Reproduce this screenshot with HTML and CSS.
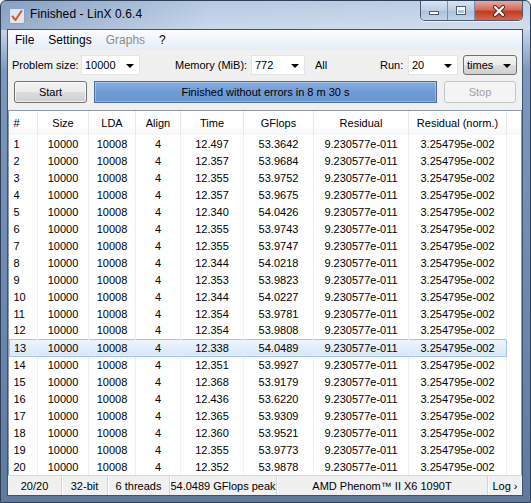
FILE: index.html
```html
<!DOCTYPE html>
<html lang="en">
<head>
  <meta charset="UTF-8" />
  <title>Finished - LinX 0.6.4</title>
  <link rel="stylesheet" href="styles.css">
</head>
<body>

<div class="window">
  <!-- Title bar -->
  <div class="titlebar">
    <svg class="app-icon" width="16" height="16" viewBox="0 0 16 16">
      <rect x="0.5" y="0.5" width="15" height="15" rx="1.5" fill="#dfe7f1" stroke="#8aa4c6"/>
      <path d="M3.5 8.5 L6.5 12 L12.5 3" fill="none" stroke="#d9572b" stroke-width="2" stroke-linecap="round" stroke-linejoin="round"/>
    </svg>
    <span class="title">Finished - LinX 0.6.4</span>
    <div class="caption-btns">
      <div class="cap-btn cap-min"><span class="min-bar"></span></div>
      <div class="cap-btn cap-max"><span class="max-box"></span></div>
      <div class="cap-btn cap-close">
        <svg width="14" height="12" viewBox="0 0 14 12">
          <path d="M3 2 L11 10 M11 2 L3 10" stroke="#4a2a24" stroke-width="4" stroke-linecap="round"/>
          <path d="M3 2 L11 10 M11 2 L3 10" stroke="#ffffff" stroke-width="2.2" stroke-linecap="round"/>
        </svg>
      </div>
    </div>
  </div>

  <div class="client">
    <!-- Menu -->
    <div class="menubar">
      <span class="menu-item">File</span>
      <span class="menu-item">Settings</span>
      <span class="menu-item disabled">Graphs</span>
      <span class="menu-item">?</span>
    </div>

    <!-- Toolbar -->
    <div class="toolbar">
      <div class="tool-row">
        <span class="label label-size">Problem size:</span>
        <div class="combo combo-size">10000<i class="arrow"></i></div>
        <span class="label label-mem">Memory (MiB):</span>
        <div class="combo combo-mem">772<i class="arrow"></i></div>
        <span class="label label-all">All</span>
        <span class="label label-run">Run:</span>
        <div class="combo combo-run">20<i class="arrow"></i></div>
        <div class="combo combo-times">times<i class="arrow"></i></div>
      </div>
      <div class="tool-row">
        <div class="btn btn-start">Start</div>
        <div class="progress">Finished without errors in 8 m 30 s</div>
        <div class="btn btn-stop">Stop</div>
      </div>
    </div>

    <!-- Results list -->
    <div class="list">
      <table class="results">
        <colgroup>
          <col style="width:28px"><col style="width:51px"><col style="width:47px">
          <col style="width:45px"><col style="width:63px"><col style="width:70px">
          <col style="width:95px"><col style="width:98px"><col style="width:15px">
        </colgroup>
        <thead>
          <tr>
            <th class="num">#</th><th>Size</th><th>LDA</th><th>Align</th><th>Time</th>
            <th>GFlops</th><th>Residual</th><th>Residual (norm.)</th><th class="filler"></th>
          </tr>
        </thead>
        <tbody>
          <tr><td class="num">1</td><td>10000</td><td>10008</td><td>4</td><td>12.497</td><td>53.3642</td><td>9.230577e-011</td><td>3.254795e-002</td><td></td></tr>
          <tr><td class="num">2</td><td>10000</td><td>10008</td><td>4</td><td>12.357</td><td>53.9684</td><td>9.230577e-011</td><td>3.254795e-002</td><td></td></tr>
          <tr><td class="num">3</td><td>10000</td><td>10008</td><td>4</td><td>12.355</td><td>53.9752</td><td>9.230577e-011</td><td>3.254795e-002</td><td></td></tr>
          <tr><td class="num">4</td><td>10000</td><td>10008</td><td>4</td><td>12.357</td><td>53.9675</td><td>9.230577e-011</td><td>3.254795e-002</td><td></td></tr>
          <tr><td class="num">5</td><td>10000</td><td>10008</td><td>4</td><td>12.340</td><td>54.0426</td><td>9.230577e-011</td><td>3.254795e-002</td><td></td></tr>
          <tr><td class="num">6</td><td>10000</td><td>10008</td><td>4</td><td>12.355</td><td>53.9743</td><td>9.230577e-011</td><td>3.254795e-002</td><td></td></tr>
          <tr><td class="num">7</td><td>10000</td><td>10008</td><td>4</td><td>12.355</td><td>53.9747</td><td>9.230577e-011</td><td>3.254795e-002</td><td></td></tr>
          <tr><td class="num">8</td><td>10000</td><td>10008</td><td>4</td><td>12.344</td><td>54.0218</td><td>9.230577e-011</td><td>3.254795e-002</td><td></td></tr>
          <tr><td class="num">9</td><td>10000</td><td>10008</td><td>4</td><td>12.353</td><td>53.9823</td><td>9.230577e-011</td><td>3.254795e-002</td><td></td></tr>
          <tr><td class="num">10</td><td>10000</td><td>10008</td><td>4</td><td>12.344</td><td>54.0227</td><td>9.230577e-011</td><td>3.254795e-002</td><td></td></tr>
          <tr><td class="num">11</td><td>10000</td><td>10008</td><td>4</td><td>12.354</td><td>53.9781</td><td>9.230577e-011</td><td>3.254795e-002</td><td></td></tr>
          <tr><td class="num">12</td><td>10000</td><td>10008</td><td>4</td><td>12.354</td><td>53.9808</td><td>9.230577e-011</td><td>3.254795e-002</td><td></td></tr>
          <tr class="selected"><td class="num">13</td><td>10000</td><td>10008</td><td>4</td><td>12.338</td><td>54.0489</td><td>9.230577e-011</td><td>3.254795e-002</td><td></td></tr>
          <tr><td class="num">14</td><td>10000</td><td>10008</td><td>4</td><td>12.351</td><td>53.9927</td><td>9.230577e-011</td><td>3.254795e-002</td><td></td></tr>
          <tr><td class="num">15</td><td>10000</td><td>10008</td><td>4</td><td>12.368</td><td>53.9179</td><td>9.230577e-011</td><td>3.254795e-002</td><td></td></tr>
          <tr><td class="num">16</td><td>10000</td><td>10008</td><td>4</td><td>12.436</td><td>53.6220</td><td>9.230577e-011</td><td>3.254795e-002</td><td></td></tr>
          <tr><td class="num">17</td><td>10000</td><td>10008</td><td>4</td><td>12.365</td><td>53.9309</td><td>9.230577e-011</td><td>3.254795e-002</td><td></td></tr>
          <tr><td class="num">18</td><td>10000</td><td>10008</td><td>4</td><td>12.360</td><td>53.9521</td><td>9.230577e-011</td><td>3.254795e-002</td><td></td></tr>
          <tr><td class="num">19</td><td>10000</td><td>10008</td><td>4</td><td>12.355</td><td>53.9773</td><td>9.230577e-011</td><td>3.254795e-002</td><td></td></tr>
          <tr><td class="num">20</td><td>10000</td><td>10008</td><td>4</td><td>12.352</td><td>53.9878</td><td>9.230577e-011</td><td>3.254795e-002</td><td></td></tr>
        </tbody>
      </table>
    </div>

    <!-- Status bar -->
    <div class="statusbar">
      <span class="st st-count">20/20</span>
      <span class="st st-bits">32-bit</span>
      <span class="st st-threads">6 threads</span>
      <span class="st st-peak">54.0489 GFlops peak</span>
      <span class="st st-cpu">AMD Phenom™ II X6 1090T</span>
      <span class="st st-log">Log ›</span>
    </div>
  </div>
</div>

</body>
</html>
```

FILE: styles.css
```css
* {
  margin: 0;
  padding: 0;
  box-sizing: border-box;
}

body {
  background: #ffffff;
  font-family: 'Liberation Sans', Tahoma, Arial, sans-serif;
  font-size: 11px;
  color: #000;
}

/* Window frame */
.window {
  width: 531px;
  height: 503px;
  border: 1px solid #2f3f58;
  border-radius: 6px 6px 0 0;
  background: linear-gradient(to bottom, #a9c0dd 0px, #c3d4e9 30px, #7d98bd 70px, #5f7aa1 100%);
  display: flex;
  flex-direction: column;
  overflow: hidden;
}

.titlebar {
  height: 29px;
  display: flex;
  align-items: flex-start;
  background: linear-gradient(to right, rgba(70,100,145,0.35), rgba(255,255,255,0.15) 40%, rgba(255,255,255,0.25));
}

.app-icon {
  margin: 7px 0 0 8px;
  flex-shrink: 0;
}

.title {
  margin: 6px 0 0 5px;
  font-size: 12px;
  color: #000;
  letter-spacing: 0.1px;
}

.caption-btns {
  margin-left: auto;
  margin-right: 7px;
  display: flex;
  height: 20px;
  border: 1px solid #47586f;
  border-top: none;
  border-radius: 0 0 5px 5px;
  overflow: hidden;
  box-shadow: 0 1px 0 rgba(255,255,255,0.6);
}

.cap-btn {
  display: flex;
  align-items: center;
  justify-content: center;
  height: 100%;
}

.cap-min,
.cap-max {
  width: 27px;
  background: linear-gradient(to bottom, #d9e4f1, #bccde3 50%, #aabfda 51%, #c2d4ea);
  border-right: 1px solid #7a8ea9;
}

.min-bar {
  width: 10px;
  height: 4px;
  margin-top: 5px;
  background: #ffffff;
  border: 1px solid #4e5d72;
}

.max-box {
  width: 10px;
  height: 9px;
  border: 1px solid #4e5d72;
  box-shadow: inset 0 0 0 1px #ffffff, inset 0 2px 0 1px #ffffff;
}

.cap-close {
  width: 47px;
  background: linear-gradient(to bottom, #e8a99e, #d66b58 45%, #c23b22 55%, #d5664c);
}

/* Client area */
.client {
  flex: 1;
  margin: 0 8px 7px 7px;
  background: #f0f0f0;
  box-shadow: 0 0 0 1px #3f5274;
  display: flex;
  flex-direction: column;
}

.menubar {
  height: 20px;
  display: flex;
  align-items: center;
  background: linear-gradient(to bottom, #fbfcfe, #e6edf6);
  font-size: 12px;
}

.menu-item {
  padding: 0 7px;
}

.menu-item.disabled {
  color: #8d8d8d;
}

.toolbar {
  padding: 5px 0 7px 0;
  display: flex;
  flex-direction: column;
  gap: 6px;
}

.tool-row {
  display: flex;
  align-items: center;
}

.tool-row:first-child {
  height: 20px;
  padding-left: 4px;
}

.tool-row:last-child {
  height: 22px;
  padding-left: 6px;
  gap: 7px;
}

.label-size { width: 69px; }
.label-mem { width: 76px; margin-left: 35px; }
.label-all { width: 65px; margin-left: 10px; }
.label-run { width: 28px; }

.combo {
  position: relative;
  height: 20px;
  line-height: 18px;
  padding-left: 3px;
  background: #ffffff;
  border: 1px solid #e3e4e8;
}

.combo .arrow {
  position: absolute;
  right: 5px;
  top: 8px;
  width: 0;
  height: 0;
  border-left: 4px solid transparent;
  border-right: 4px solid transparent;
  border-top: 4px solid #000;
}

.combo-size { width: 59px; }
.combo-mem { width: 54px; }
.combo-run { width: 50px; }

.combo-times {
  width: 54px;
  margin-left: 5px;
  border: 1px solid #707070;
  border-radius: 3px;
  background: linear-gradient(to bottom, #f2f2f2, #ebebeb 50%, #dddddd 51%, #cfcfcf);
}

.btn {
  height: 22px;
  line-height: 20px;
  text-align: center;
  border-radius: 3px;
}

.btn-start {
  width: 73px;
  border: 1px solid #707070;
  background: linear-gradient(to bottom, #f2f2f2, #ebebeb 50%, #dddddd 51%, #cfcfcf);
  box-shadow: inset 0 0 0 1px rgba(255,255,255,0.7);
}

.btn-stop {
  width: 72px;
  border: 1px solid #c2c5c8;
  background: #f4f4f4;
  color: #a0a0a0;
}

.progress {
  width: 343px;
  height: 22px;
  line-height: 20px;
  text-align: center;
  border: 1px solid #4a6c98;
  background: linear-gradient(to bottom, #86afe2, #6f9cd7 50%, #6893cf);
  box-shadow: inset 0 0 0 1px rgba(255,255,255,0.3);
}

/* Results list */
.list {
  height: 365px;
  background: #ffffff;
  border: 1px solid #8e9aaa;
  border-bottom: none;
  overflow: hidden;
}

.results {
  width: 512px;
  table-layout: fixed;
  border-collapse: collapse;
}

.results th {
  height: 24px;
  font-weight: normal;
  text-align: center;
  background: linear-gradient(to bottom, #ffffff, #ffffff 60%, #f5f6f8);
  border-right: 1px solid #e4e7ec;
}

.results td {
  height: 17px;
  text-align: center;
  white-space: nowrap;
  border-right: 1px solid #f0f0f0;
}

.results th.num,
.results td.num {
  text-align: left;
  padding-left: 4px;
}

.results th.filler,
.results tr td:last-child {
  border-right: none;
}

.results tr.selected td {
  background: linear-gradient(to bottom, #eef4fc, #d8e7f9);
  border-top: 1px solid #a6c5ec;
  border-bottom: 1px solid #a6c5ec;
  border-right-color: transparent;
}

.results tr.selected td:first-child {
  border-left: 1px solid #a6c5ec;
}

.results tr.selected td:nth-child(8) {
  border-right: 1px solid #a6c5ec;
}

.results tr.selected td:last-child {
  background: #ffffff;
  border-top: none;
  border-bottom: none;
}

/* Status bar */
.statusbar {
  height: 20px;
  display: flex;
  align-items: stretch;
  background: #f0f0f0;
  border-top: 1px solid #d9d9d9;
}

.st {
  display: flex;
  align-items: center;
  justify-content: center;
  border-right: 1px solid #d5d5d5;
  box-shadow: 1px 0 0 #ffffff;
}

.st-count { width: 54px; }
.st-bits { width: 46px; }
.st-threads { width: 62px; }
.st-peak { width: 107px; }
.st-cpu { width: 211px; }
.st-log { width: 34px; border-right: none; box-shadow: none; }
```
